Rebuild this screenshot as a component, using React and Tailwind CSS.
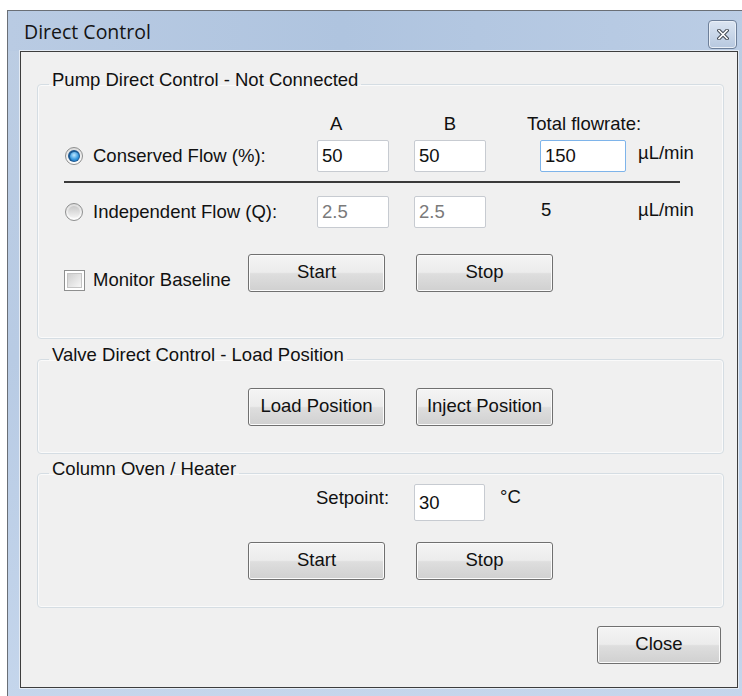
import React from "react";

function Radio({ checked }) {
  return (
    <span className="flex h-[18px] w-[18px] shrink-0 items-center justify-center rounded-full border border-[#8e8f8f] bg-[linear-gradient(to_bottom,#dcdcdc,#ffffff)]">
      {checked ? (
        <span className="flex h-[12px] w-[12px] items-center justify-center rounded-full bg-[#1d5a93]">
          <span className="h-[9px] w-[9px] rounded-full bg-[radial-gradient(circle_at_45%_35%,#bfe8ff,#3a9be0_55%,#115da8)]" />
        </span>
      ) : (
        <span className="h-[12px] w-[12px] rounded-full bg-[linear-gradient(to_bottom,#c9c9c9,#f3f3f3)]" />
      )}
    </span>
  );
}

function Checkbox() {
  return (
    <span className="flex h-[21px] w-[21px] shrink-0 items-center justify-center border border-[#8e8f8f] bg-white">
      <span className="h-[15px] w-[15px] border border-[#c4c4c4] bg-[linear-gradient(135deg,#cfcfcf,#f7f7f7)]" />
    </span>
  );
}

function Button({ children, className = "" }) {
  return (
    <button
      type="button"
      className={`flex h-[38px] items-center justify-center rounded-[3px] border border-[#707070] bg-[linear-gradient(to_bottom,#f4f4f4_0%,#ececec_48%,#dedede_52%,#d0d0d0_100%)] pb-[2px] text-[18.5px] leading-[22px] text-[#111] shadow-[inset_0_0_0_1px_#fbfbfb] ${className}`}
    >
      {children}
    </button>
  );
}

function Field({ value, disabled, focused, className = "" }) {
  const border = focused ? "border-[#7eb4ea]" : "border-[#c7cbd1]";
  return (
    <div
      className={`flex items-center rounded-[2px] border bg-white pl-[4px] text-[18.5px] leading-[22px] ${border} ${
        disabled ? "text-[#7a7a7a]" : "text-[#111]"
      } ${className}`}
    >
      {value}
    </div>
  );
}

function Group({ title, children, className = "" }) {
  return (
    <fieldset
      className={`w-[687px] rounded-[4px] border border-[#d5dde3] shadow-[inset_0_0_0_1px_#fafafa] ${className}`}
    >
      <legend className="ml-[11px] px-[3px] pb-[8px] text-[18.5px] leading-[22px] text-[#111]">
        {title}
      </legend>
      {children}
    </fieldset>
  );
}

export default function App() {
  return (
    <div className="h-[696px] w-[742px] overflow-hidden bg-white pl-[7px] pt-[10px] font-['Liberation_Sans',Arial,sans-serif] text-[#111]">
      <div className="flex h-[700px] w-[744px] flex-col border border-[#6a6f76] bg-[linear-gradient(to_bottom,#bccde3,#b8cbe4_50%,#c5d6ec)]">
        {/* caption */}
        <div className="flex h-[40px] shrink-0 items-start bg-[linear-gradient(90deg,#b9cbe3,#afc4df_45%,#bbcde5)]">
          <span className="ml-[16px] mt-[8px] font-['Open_Sans',sans-serif] text-[19.5px] leading-[26px] text-[#141414]">
            Direct Control
          </span>
          <span className="ml-auto mr-[13px] mt-[9px] flex h-[29px] w-[29px] items-center justify-center rounded-[4px] border border-[#6d7f99] bg-[linear-gradient(to_bottom,#dbe5f2,#b7c8df)] shadow-[inset_0_0_0_1px_#e9eff7]">
            <svg width="12" height="11" viewBox="0 0 12 11">
              <path
                d="M2 1.5 L10 9.5 M10 1.5 L2 9.5"
                stroke="#3e4650"
                strokeWidth="3.6"
                strokeLinecap="square"
              />
              <path
                d="M2 1.5 L10 9.5 M10 1.5 L2 9.5"
                stroke="#ffffff"
                strokeWidth="1.6"
                strokeLinecap="square"
              />
            </svg>
          </span>
        </div>

        {/* client area */}
        <div className="ml-[12px] flex h-[637px] w-[718px] shrink-0 flex-col border border-[#3d3d3d] bg-[#f0f0f0] shadow-[0_0_0_1px_#e4ebf4]">
          {/* pump */}
          <Group title="Pump Direct Control - Not Connected" className="ml-[16px] mt-[17px] pb-[46px] pt-[14px]">
            <div className="flex h-[22px] items-center text-[18.5px] leading-[22px]">
              <div className="w-[279px]" />
              <div className="w-[72px] pl-[13px]">A</div>
              <div className="ml-[25px] w-[72px] text-center">B</div>
              <div className="ml-[41px]">Total flowrate:</div>
            </div>

            <div className="mt-[5px] flex h-[32px] items-center text-[18.5px] leading-[22px]">
              <div className="flex w-[279px] items-center">
                <span className="ml-[27px]">
                  <Radio checked />
                </span>
                <span className="ml-[10px]">Conserved Flow (%):</span>
              </div>
              <Field value="50" className="h-[32px] w-[72px]" />
              <Field value="50" className="ml-[25px] h-[32px] w-[72px]" />
              <Field value="150" focused className="ml-[54px] h-[32px] w-[86px]" />
              <span className="mb-[6px] ml-[12px]">µL/min</span>
            </div>

            <div className="ml-[26px] mt-[9px] h-[2px] w-[616px] bg-[#3a3a3a]" />

            <div className="mt-[13px] flex h-[32px] items-center text-[18.5px] leading-[22px]">
              <div className="flex w-[279px] items-center">
                <span className="ml-[27px]">
                  <Radio />
                </span>
                <span className="ml-[10px]">Independent Flow (Q):</span>
              </div>
              <Field value="2.5" disabled className="h-[32px] w-[72px]" />
              <Field value="2.5" disabled className="ml-[25px] h-[32px] w-[72px]" />
              <span className="mb-[4px] ml-[55px] w-[85px]">5</span>
              <span className="mb-[4px] ml-[12px]">µL/min</span>
            </div>

            <div className="mt-[26px] flex items-start text-[18.5px] leading-[22px]">
              <div className="mt-[15px] flex w-[210px] items-center">
                <span className="ml-[26px]">
                  <Checkbox />
                </span>
                <span className="ml-[8px]">Monitor Baseline</span>
              </div>
              <Button className="w-[137px]">Start</Button>
              <Button className="ml-[31px] w-[137px]">Stop</Button>
            </div>
          </Group>

          {/* valve */}
          <Group title="Valve Direct Control - Load Position" className="ml-[16px] mt-[5px] pb-[27px] pt-[14px]">
            <div className="flex">
              <Button className="ml-[210px] w-[137px]">Load Position</Button>
              <Button className="ml-[31px] w-[137px]">Inject Position</Button>
            </div>
          </Group>

          {/* oven */}
          <Group title="Column Oven / Heater" className="ml-[16px] mt-[4px] pb-[27px]">
            <div className="-mt-[4px] flex items-start text-[18.5px] leading-[22px]">
              <span className="ml-[278px] mt-[3px] w-[84px]">Setpoint:</span>
              <Field value="30" className="ml-[14px] h-[37px] w-[71px]" />
              <span className="ml-[15px] mt-[2px]">°C</span>
            </div>
            <div className="mt-[21px] flex">
              <Button className="ml-[210px] w-[137px]">Start</Button>
              <Button className="ml-[31px] w-[137px]">Stop</Button>
            </div>
          </Group>

          <div className="mt-[18px] flex">
            <Button className="ml-[576px] w-[124px]">Close</Button>
          </div>
        </div>
      </div>
    </div>
  );
}
